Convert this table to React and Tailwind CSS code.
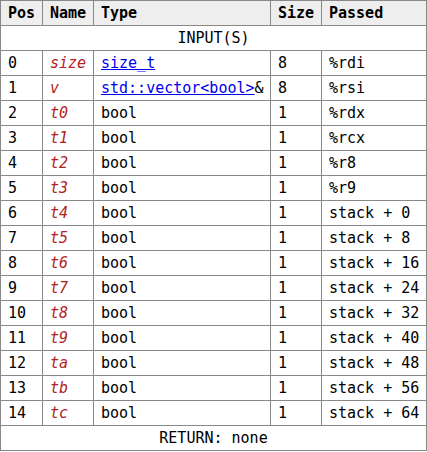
const rows = [
  ["0", "size", "size_t", true, "8", "%rdi"],
  ["1", "v", "std::vector<bool>", true, "8", "%rsi"],
  ["2", "t0", "bool", false, "1", "%rdx"],
  ["3", "t1", "bool", false, "1", "%rcx"],
  ["4", "t2", "bool", false, "1", "%r8"],
  ["5", "t3", "bool", false, "1", "%r9"],
  ["6", "t4", "bool", false, "1", "stack + 0"],
  ["7", "t5", "bool", false, "1", "stack + 8"],
  ["8", "t6", "bool", false, "1", "stack + 16"],
  ["9", "t7", "bool", false, "1", "stack + 24"],
  ["10", "t8", "bool", false, "1", "stack + 32"],
  ["11", "t9", "bool", false, "1", "stack + 40"],
  ["12", "ta", "bool", false, "1", "stack + 48"],
  ["13", "tb", "bool", false, "1", "stack + 56"],
  ["14", "tc", "bool", false, "1", "stack + 64"],
];

const base = "border border-[#888888] h-[25px] px-[7px] py-0 align-middle whitespace-nowrap";
const cell = base + " text-left";
const wide = base + " text-center";

export default function App() {
  return (
    <div className="bg-white w-[427px] h-[452px] font-['DejaVu_Sans_Mono',monospace] text-[15px] text-black">
      <table className="border-collapse table-fixed w-[426px]">
        <colgroup>
          <col className="w-[42px]" />
          <col className="w-[51px]" />
          <col className="w-[177px]" />
          <col className="w-[51px]" />
          <col className="w-[105px]" />
        </colgroup>
        <thead>
          <tr className="bg-[#eeeeee]">
            <th className={cell + " font-bold"}>Pos</th>
            <th className={cell + " font-bold"}>Name</th>
            <th className={cell + " font-bold"}>Type</th>
            <th className={cell + " font-bold"}>Size</th>
            <th className={cell + " font-bold"}>Passed</th>
          </tr>
        </thead>
        <tbody>
          <tr>
            <td colSpan={5} className={wide}>INPUT(S)</td>
          </tr>
          {rows.map(([pos, name, type, link, size, passed]) => (
            <tr key={pos}>
              <td className={cell}>{pos}</td>
              <td className={cell + " italic text-[#b22222]"}>{name}</td>
              <td className={cell}>
                {link ? (
                  <>
                    <a href="#" className="text-[#0000ee] underline">{type}</a>
                    {name === "v" ? "&" : ""}
                  </>
                ) : (
                  type
                )}
              </td>
              <td className={cell}>{size}</td>
              <td className={cell}>{passed}</td>
            </tr>
          ))}
          <tr>
            <td colSpan={5} className={wide}>RETURN: none</td>
          </tr>
        </tbody>
      </table>
    </div>
  );
}
